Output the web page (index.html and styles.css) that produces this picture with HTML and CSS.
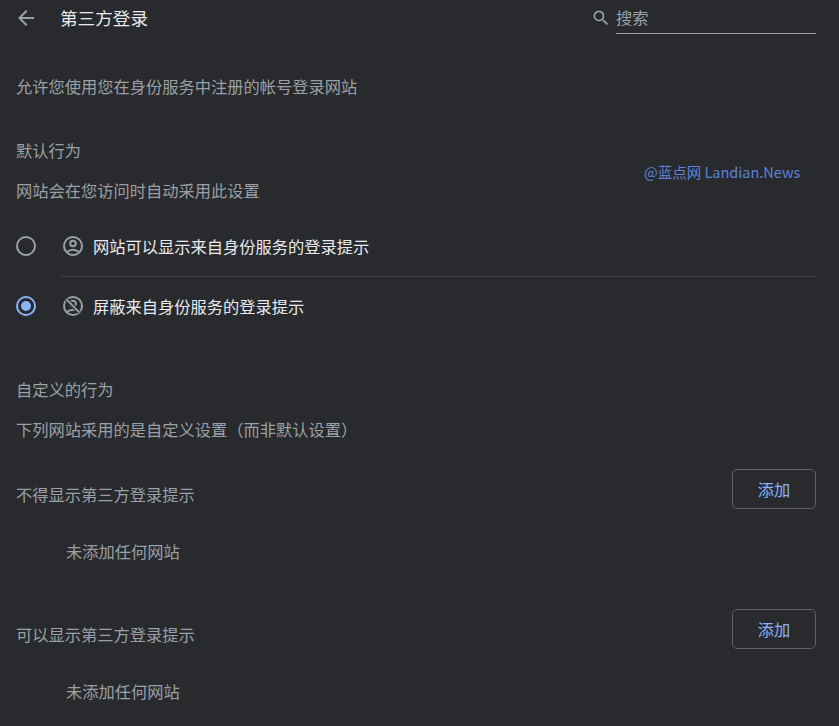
FILE: index.html
```html
<!DOCTYPE html>
<html lang="zh-CN">
<head>
  <meta charset="UTF-8">
  <meta name="viewport" content="width=device-width, initial-scale=1.0">
  <title>第三方登录</title>
  <link rel="stylesheet" href="styles.css">
</head>
<body>
  <div class="header">
    <svg class="back" viewBox="0 0 24 24" width="24" height="24"><path d="M20 11H7.83l5.59-5.59L12 4l-8 8 8 8 1.41-1.41L7.83 13H20v-2z"/></svg>
    <h1>第三方登录</h1>
    <div class="search">
      <svg class="search-icon" viewBox="0 0 24 24" width="20" height="20"><path d="M15.5 14h-.79l-.28-.27A6.47 6.47 0 0 0 16 9.5 6.5 6.5 0 1 0 9.5 16c1.61 0 3.09-.59 4.23-1.57l.27.28v.79l5 4.99L20.49 19l-4.99-5zm-6 0C7.01 14 5 11.99 5 9.5S7.01 5 9.5 5 14 7.01 14 9.5 11.99 14 9.5 14z"/></svg>
      <div class="search-box">搜索</div>
    </div>
  </div>

  <p class="line intro">允许您使用您在身份服务中注册的帐号登录网站</p>

  <h2 class="line group-title">默认行为</h2>
  <p class="line">网站会在您访问时自动采用此设置</p>

  <div class="radio-row">
    <span class="radio"></span>
    <svg class="row-icon" viewBox="0 0 24 24" width="24" height="24"><circle cx="12" cy="12" r="9"/><circle cx="12" cy="9.500" r="2.800"/><path d="M5.800 18.400C7.500 16.600 9.600 15.700 12 15.700s4.500.9 6.200 2.700"/></svg>
    <span class="radio-label">网站可以显示来自身份服务的登录提示</span>
  </div>
  <div class="radio-row second">
    <span class="radio checked"></span>
    <svg class="row-icon" viewBox="0 0 24 24" width="24" height="24"><circle cx="12" cy="12" r="9"/><circle cx="12" cy="9.500" r="2.800"/><path d="M5.800 18.400C7.500 16.600 9.600 15.700 12 15.700s4.500.9 6.200 2.700"/><path class="gap" d="M5.600 5.600l12.800 12.800"/><path d="M5.600 5.600l12.800 12.800"/></svg>
    <span class="radio-label">屏蔽来自身份服务的登录提示</span>
  </div>

  <h2 class="line group-title custom">自定义的行为</h2>
  <p class="line">下列网站采用的是自定义设置（而非默认设置）</p>

  <div class="list-head first">
    <span>不得显示第三方登录提示</span>
    <button class="add-btn">添加</button>
  </div>
  <div class="empty">未添加任何网站</div>

  <div class="list-head">
    <span>可以显示第三方登录提示</span>
    <button class="add-btn">添加</button>
  </div>
  <div class="empty">未添加任何网站</div>

  <div class="watermark">@蓝点网 Landian.News</div>
</body>
</html>
```

FILE: styles.css
```css
html, body { height: 100%; overflow: hidden; }
body {
  margin: 0;
  background: #292a2d;
  color: #9aa0a6;
  font-family: "Noto Sans CJK SC", "Noto Sans", sans-serif;
  font-size: 16.25px;
  position: relative;
}

/* top bar */
.header {
  display: flex;
  align-items: center;
  height: 36px;
  padding: 0 23px 0 14px;
}
.back { fill: #9aa0a6; width: 24px; height: 24px; }
h1 {
  margin: 0 0 0 22px;
  font-size: 17.6px;
  font-weight: 400;
  color: #e8eaed;
  line-height: 35px;
  height: 36px;
}
.search {
  display: flex;
  align-items: flex-start;
  align-self: flex-start;
  margin-left: auto;
}
.search-icon { fill: #9aa0a6; margin: 8px 5px 0 0; }
.search-box {
  width: 200px;
  height: 33px;
  line-height: 35px;
  border-bottom: 1px solid #9aa0a6;
}

.line {
  margin: 0;
  padding-left: 16px;
  height: 24px;
  line-height: 24px;
  font-weight: 400;
  font-size: 16.25px;
}
.intro { margin-top: 38px; }
.group-title { margin-top: 40px; margin-bottom: 16px; }
.group-title.custom { margin-top: 41px; }

/* radios */
.radio-row {
  display: flex;
  align-items: center;
  height: 60px;
  padding-left: 16px;
  margin-top: 14px;
}
.radio-row.second {
  margin: 0;
  position: relative;
}
.radio-row.second::before {
  content: "";
  position: absolute;
  top: 0;
  left: 61px;
  right: 23px;
  border-top: 1px solid #3f4042;
}
.radio {
  width: 20px;
  height: 20px;
  box-sizing: border-box;
  border: 2px solid #9aa0a6;
  border-radius: 50%;
  display: flex;
  align-items: center;
  justify-content: center;
}
.radio.checked { border-color: #8ab4f8; }
.radio.checked::after {
  content: "";
  width: 10px;
  height: 10px;
  border-radius: 50%;
  background: #8ab4f8;
}
.row-icon {
  fill: none;
  stroke: #9aa0a6;
  stroke-width: 2;
  margin-left: 25px;
}
.row-icon .gap { stroke: #292a2d; stroke-width: 4; }
.radio-label {
  margin-left: 8px;
  color: #e8eaed;
}

/* site lists */
.list-head {
  display: flex;
  justify-content: space-between;
  padding: 0 23px 0 16px;
  height: 40px;
  line-height: 50px;
  margin-top: 46px;
}
.list-head.first { margin-top: 28px; }
.add-btn {
  width: 84px;
  height: 40px;
  padding: 0;
  background: transparent;
  border: 1px solid #5f6368;
  border-radius: 5px;
  color: #8ab4f8;
  font-family: inherit;
  font-size: 16.25px;
}
.empty {
  padding-left: 66px;
  height: 24px;
  line-height: 24px;
  margin-top: 30px;
}

.watermark {
  position: absolute;
  top: 162px;
  left: 644px;
  color: #5b82d6;
  font-size: 14.5px;
  line-height: 20px;
  white-space: nowrap;
}
```
